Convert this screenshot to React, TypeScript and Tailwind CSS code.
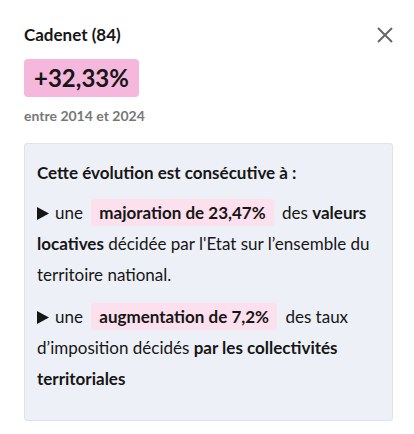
import React from 'react';

const Tri = () => (
  <svg width="12" height="13" viewBox="0 0 12 13" className="inline-block align-[-1px] mr-1.5">
    <path d="M0 0 L12 6.5 L0 13 Z" fill="#161616" />
  </svg>
);

const Mark: React.FC<{ children: React.ReactNode }> = ({ children }) => (
  <span className="inline-block mx-1 px-2 leading-[27px] rounded-[3px] bg-[#fde0ee] font-bold">{children}</span>
);

export default function App() {
  return (
    <div className="w-[414px] h-[434px] bg-white pl-6 pr-[21px] pt-[24px] text-[#161616] font-['Lato',sans-serif]">
      <div className="flex items-center justify-between">
        <h2 className="text-[17px] font-bold leading-[22px]">Cadenet (84)</h2>
        <button className="text-[#666]">
          <svg width="16" height="16" viewBox="0 0 16 16">
            <path d="M1 1 L15 15 M15 1 L1 15" stroke="#666" strokeWidth="2" fill="none" />
          </svg>
        </button>
      </div>
      <div className="mt-[13px] inline-block bg-[#f5b7dc] rounded-[4px] px-[10px] h-[38px] leading-[38px] text-[24px] font-bold">
        +32,33%
      </div>
      <p className="mt-[10px] text-[14px] font-bold text-[#777] leading-[18px]">entre 2014 et 2024</p>
      <div className="mt-[18px] bg-[#eef0f7] border border-[#dfe2ec] rounded-[3px] px-3 pt-[13px] pb-[26px] text-[17px] leading-[31px]">
        <p className="font-bold">Cette évolution est consécutive à :</p>
        <p className="mt-[9px]">
          <Tri />une <Mark>majoration de 23,47%</Mark> des <b>valeurs locatives</b> décidée par l'Etat sur l’ensemble du territoire national.
        </p>
        <p className="mt-[11px]">
          <Tri />une <Mark>augmentation de 7,2%</Mark> des taux d’imposition décidés <b>par les collectivités territoriales</b>
        </p>
      </div>
    </div>
  );
}
